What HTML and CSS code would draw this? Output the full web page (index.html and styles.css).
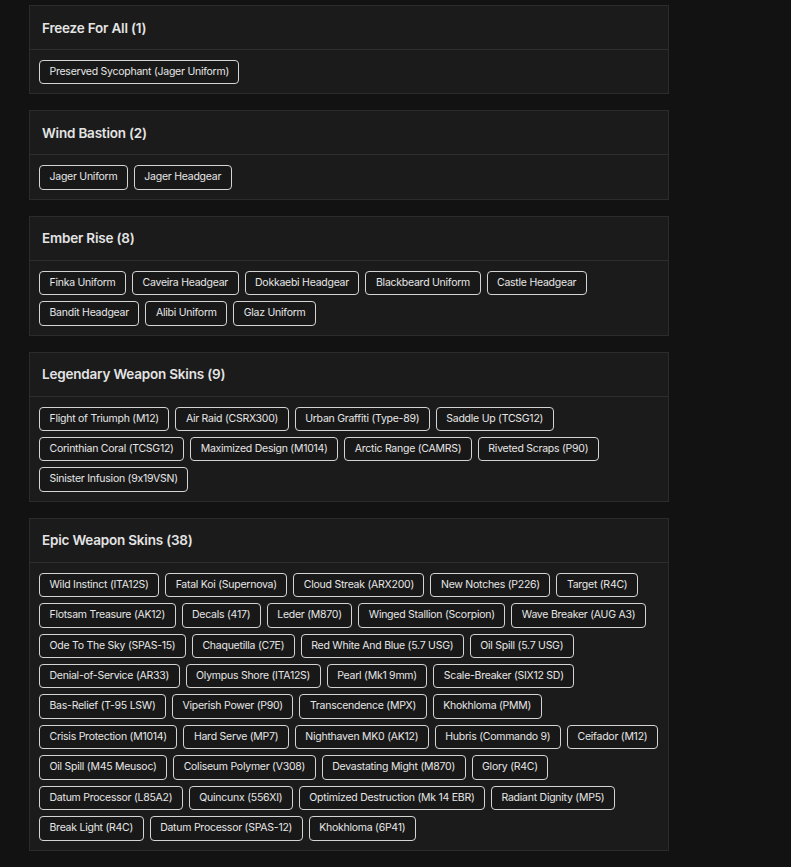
FILE: index.html
```html
<!DOCTYPE html>
<html>
<head>
<meta charset="utf-8">
<link rel="stylesheet" href="styles.css">
</head>
<body>
<main class="list">
  <section class="card">
    <h2 class="card-title">Freeze For All (1)</h2>
    <div class="tags">
      <span class="tag">Preserved Sycophant (Jager Uniform)</span>
    </div>
  </section>
  <section class="card">
    <h2 class="card-title">Wind Bastion (2)</h2>
    <div class="tags">
      <span class="tag">Jager Uniform</span>
      <span class="tag">Jager Headgear</span>
    </div>
  </section>
  <section class="card">
    <h2 class="card-title">Ember Rise (8)</h2>
    <div class="tags">
      <span class="tag">Finka Uniform</span>
      <span class="tag">Caveira Headgear</span>
      <span class="tag">Dokkaebi Headgear</span>
      <span class="tag">Blackbeard Uniform</span>
      <span class="tag">Castle Headgear</span>
      <span class="tag">Bandit Headgear</span>
      <span class="tag">Alibi Uniform</span>
      <span class="tag">Glaz Uniform</span>
    </div>
  </section>
  <section class="card">
    <h2 class="card-title">Legendary Weapon Skins (9)</h2>
    <div class="tags">
      <span class="tag">Flight of Triumph (M12)</span>
      <span class="tag">Air Raid (CSRX300)</span>
      <span class="tag">Urban Graffiti (Type-89)</span>
      <span class="tag">Saddle Up (TCSG12)</span>
      <span class="tag">Corinthian Coral (TCSG12)</span>
      <span class="tag">Maximized Design (M1014)</span>
      <span class="tag">Arctic Range (CAMRS)</span>
      <span class="tag">Riveted Scraps (P90)</span>
      <span class="tag">Sinister Infusion (9x19VSN)</span>
    </div>
  </section>
  <section class="card">
    <h2 class="card-title">Epic Weapon Skins (38)</h2>
    <div class="tags">
      <span class="tag">Wild Instinct (ITA12S)</span>
      <span class="tag">Fatal Koi (Supernova)</span>
      <span class="tag">Cloud Streak (ARX200)</span>
      <span class="tag">New Notches (P226)</span>
      <span class="tag">Target (R4C)</span>
      <span class="tag">Flotsam Treasure (AK12)</span>
      <span class="tag">Decals (417)</span>
      <span class="tag">Leder (M870)</span>
      <span class="tag">Winged Stallion (Scorpion)</span>
      <span class="tag">Wave Breaker (AUG A3)</span>
      <span class="tag">Ode To The Sky (SPAS-15)</span>
      <span class="tag">Chaquetilla (C7E)</span>
      <span class="tag">Red White And Blue (5.7 USG)</span>
      <span class="tag">Oil Spill (5.7 USG)</span>
      <span class="tag">Denial-of-Service (AR33)</span>
      <span class="tag">Olympus Shore (ITA12S)</span>
      <span class="tag">Pearl (Mk1 9mm)</span>
      <span class="tag">Scale-Breaker (SIX12 SD)</span>
      <span class="tag">Bas-Relief (T-95 LSW)</span>
      <span class="tag">Viperish Power (P90)</span>
      <span class="tag">Transcendence (MPX)</span>
      <span class="tag">Khokhloma (PMM)</span>
      <span class="tag">Crisis Protection (M1014)</span>
      <span class="tag">Hard Serve (MP7)</span>
      <span class="tag">Nighthaven MK0 (AK12)</span>
      <span class="tag">Hubris (Commando 9)</span>
      <span class="tag">Ceifador (M12)</span>
      <span class="tag">Oil Spill (M45 Meusoc)</span>
      <span class="tag">Coliseum Polymer (V308)</span>
      <span class="tag">Devastating Might (M870)</span>
      <span class="tag">Glory (R4C)</span>
      <span class="tag">Datum Processor (L85A2)</span>
      <span class="tag">Quincunx (556XI)</span>
      <span class="tag">Optimized Destruction (Mk 14 EBR)</span>
      <span class="tag">Radiant Dignity (MP5)</span>
      <span class="tag">Break Light (R4C)</span>
      <span class="tag">Datum Processor (SPAS-12)</span>
      <span class="tag">Khokhloma (6P41)</span>
    </div>
  </section>
</main>
</body>
</html>
```

FILE: styles.css
```css
html, body {
  margin: 0;
  padding: 0;
  background: #121212;
}

body {
  font-family: Inter, "Open Sans", "Liberation Sans", sans-serif;
  font-feature-settings: "calt" 0;
  color: #e2e2e2;
}

.list {
  width: 640px;
  margin-left: 29px;
  padding-top: 5px;
  display: flex;
  flex-direction: column;
  gap: 16px;
}

.card {
  background: #1b1b1b;
  border: 1px solid #2b2b2b;
}

.card-title {
  margin: 0;
  height: 43px;
  display: flex;
  align-items: center;
  padding: 0 12px;
  font-size: 13.5px;
  font-weight: 600;
  letter-spacing: -0.2px;
  color: #e4e4e4;
  border-bottom: 1px solid #2e2e2e;
}

.tags {
  display: flex;
  flex-wrap: wrap;
  gap: 6px 6px;
  padding: 10px 9px 9px;
}

.tag {
  display: inline-block;
  font-size: 10.5px;
  letter-spacing: -0.25px;
  line-height: 16.4px;
  padding: 3px 9.5px;
  border: 1px solid #d4d4d4;
  border-radius: 4px;
  background: #181818;
  color: #e6e6e6;
  white-space: nowrap;
}
```
